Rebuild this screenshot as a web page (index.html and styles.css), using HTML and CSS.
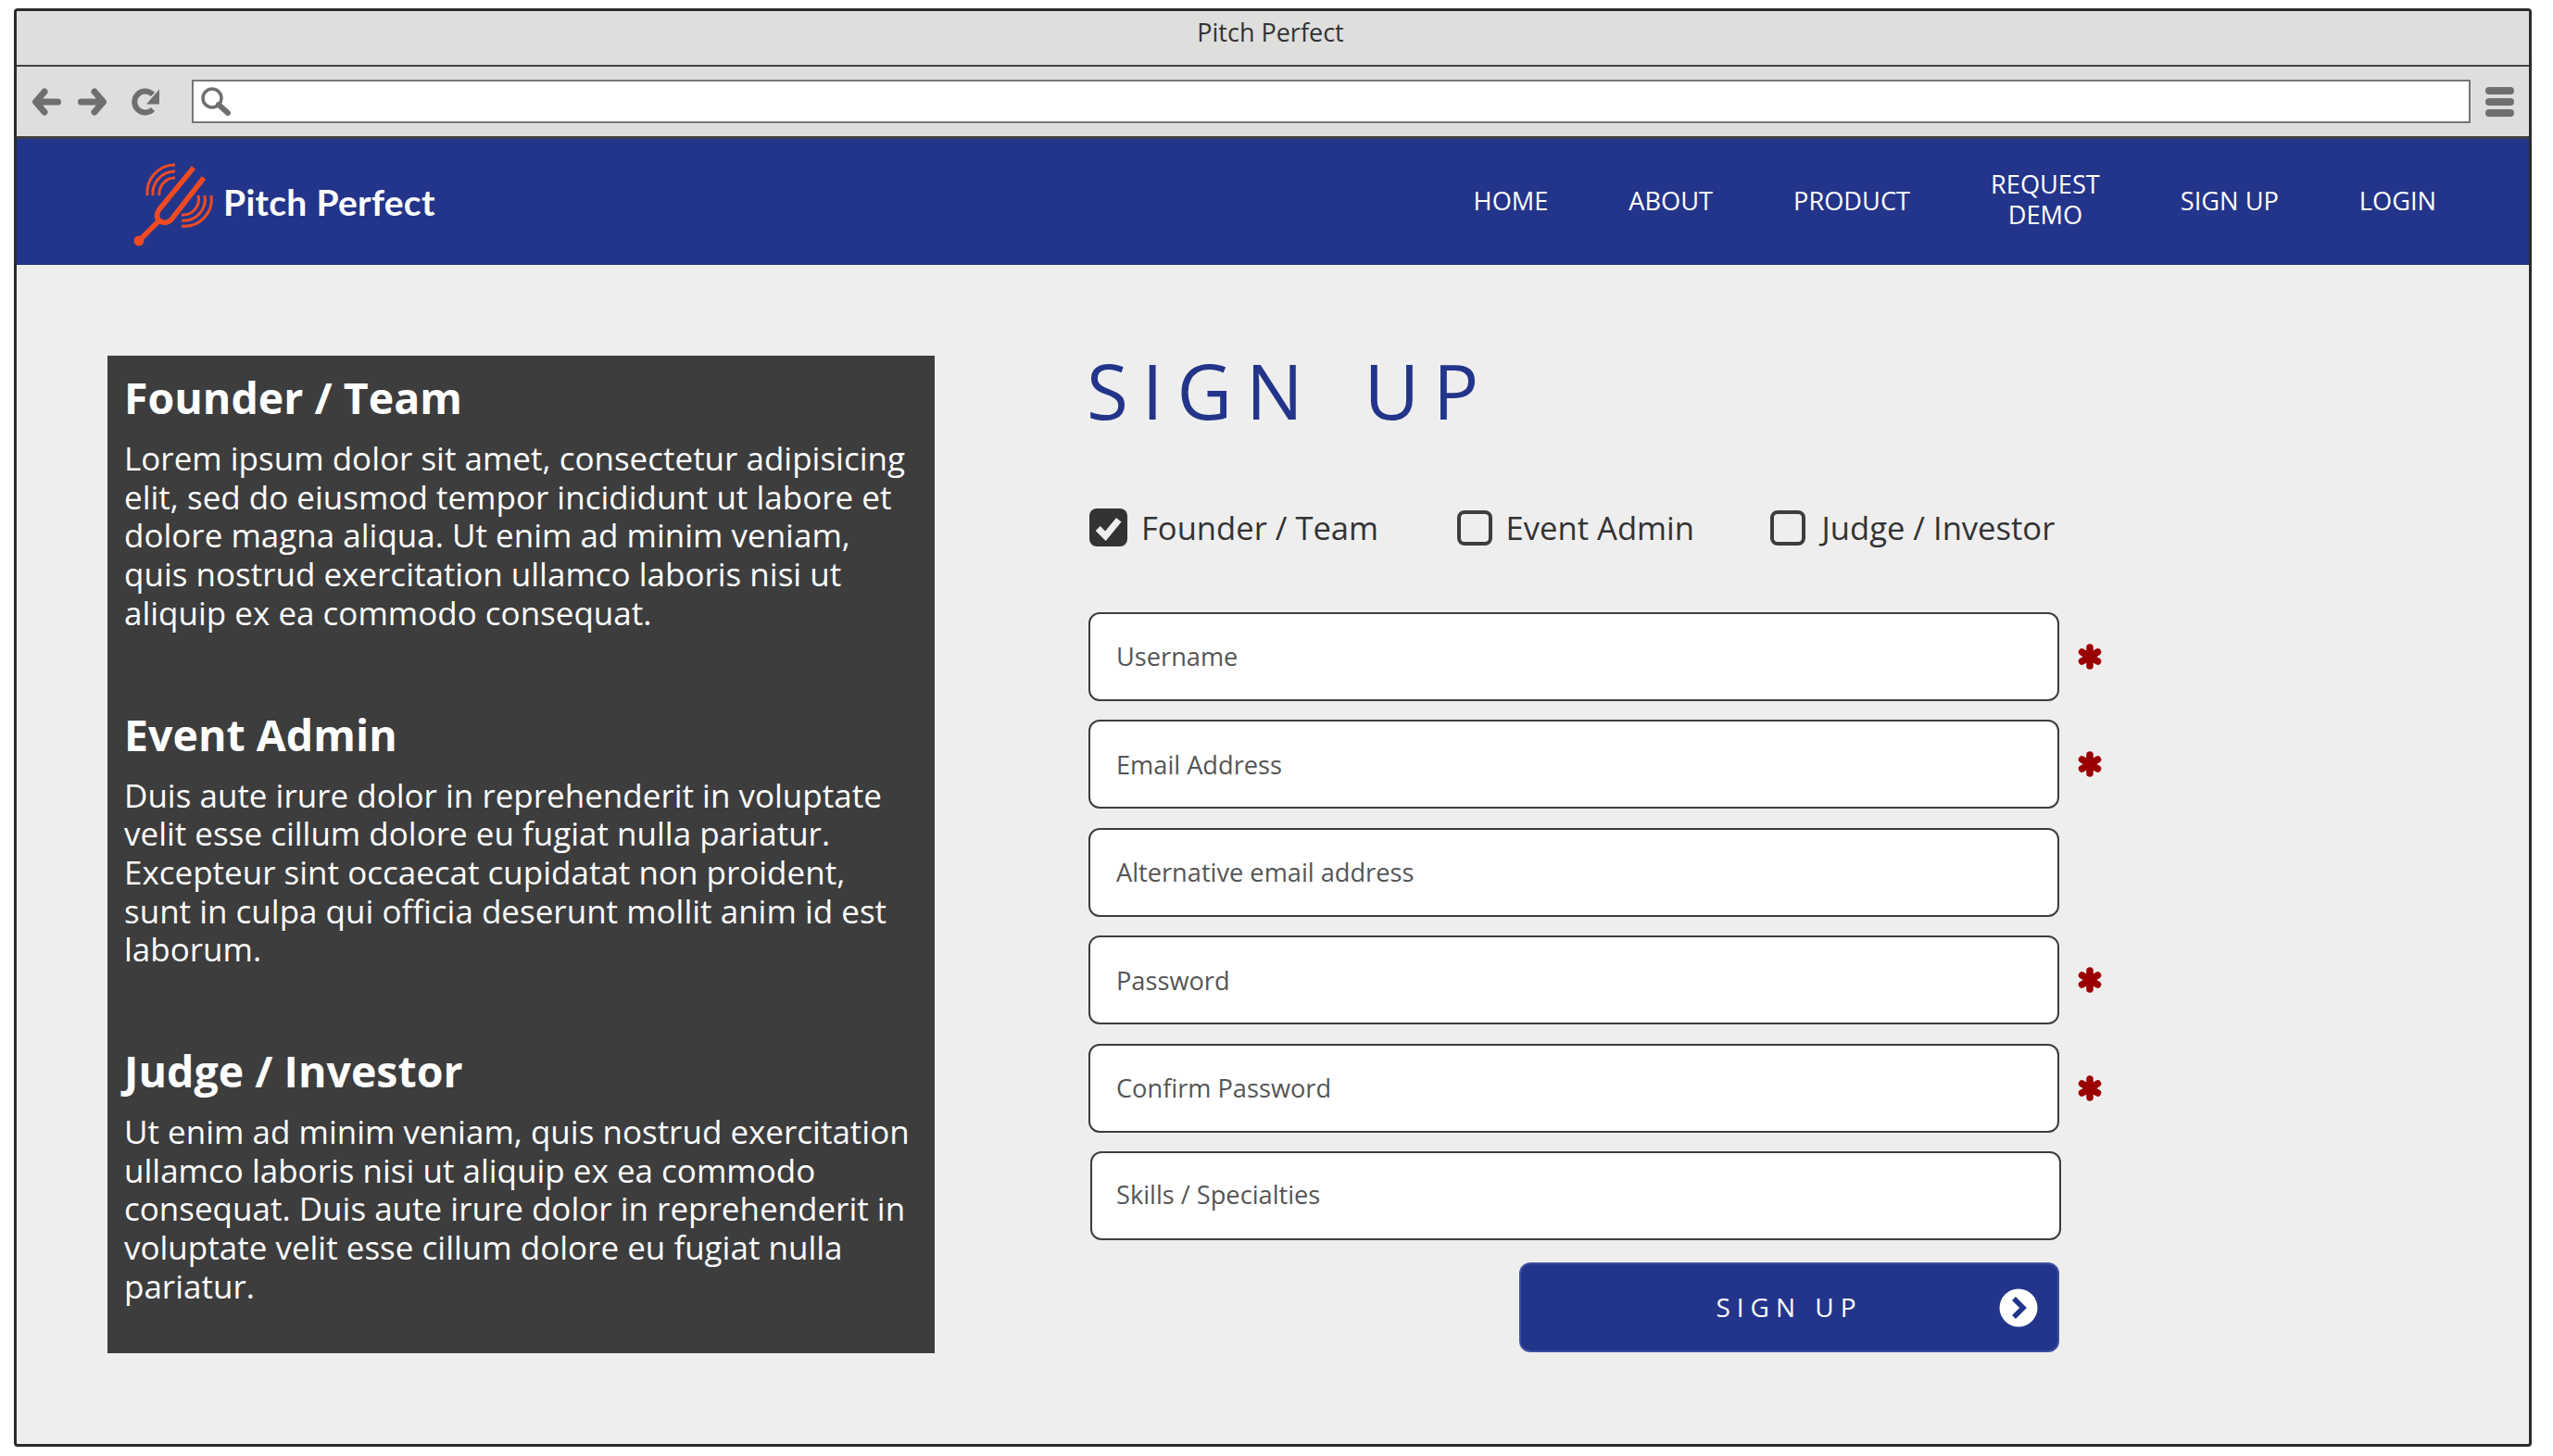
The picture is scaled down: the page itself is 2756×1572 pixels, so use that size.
FILE: index.html
```html
<!DOCTYPE html>
<html lang="en">
<head>
<meta charset="utf-8">
<title>Pitch Perfect</title>
<link rel="stylesheet" href="styles.css">
</head>
<body>
<div class="window">
  <div class="titlebar">Pitch Perfect</div>
  <div class="toolbar">
    <div class="toolbar-icons">
      <svg class="tool-icon" viewBox="0 0 31 30"><path d="M13 4 3.500 15 13 26M6 15h21.500" fill="none" stroke="#6f6f6f" stroke-width="7" stroke-linecap="round" stroke-linejoin="round"/></svg>
      <svg class="tool-icon" viewBox="0 0 31 30"><path d="M18 4l9.500 11L18 26M25 15H3.500" fill="none" stroke="#6f6f6f" stroke-width="7" stroke-linecap="round" stroke-linejoin="round"/></svg>
      <svg class="tool-icon reload" viewBox="0 0 31 30"><path d="M24 23a11.500 11.500 0 1 1 0-16" fill="none" stroke="#6f6f6f" stroke-width="6"/><path d="M31 1.500v16H17z" fill="#6f6f6f"/></svg>
    </div>
    <div class="urlbar">
      <svg class="search" viewBox="0 0 32 31"><circle cx="12" cy="12" r="10" fill="none" stroke="#6f6f6f" stroke-width="3.500"/><path d="M19 19l10 9" stroke="#6f6f6f" stroke-width="6" stroke-linecap="round"/></svg>
    </div>
    <div class="burger"><span></span><span></span><span></span></div>
  </div>
  <header class="nav">
    <div class="brand">
      <svg class="logo" viewBox="0 0 120 110">
        <g fill="none" stroke="#f04a23" stroke-width="3">
          <path d="M28 45a30 30 0 0 1 30-33M34 45a24 24 0 0 1 24-26M41 45a17 17 0 0 1 17-19"/>
          <path d="M65 78a29 29 0 0 0 32-33M65 72a23 23 0 0 0 25-27M65 66a17 17 0 0 0 18-21"/>
        </g>
        <path d="M78 15 41 60c-5 7-2 13 4 14 4 1 7-1 9-3l35-45M43 70 19 94" fill="none" stroke="#f04a23" stroke-width="5.500"/>
        <circle cx="19" cy="94" r="5.500" fill="#f04a23"/>
      </svg>
      <span class="brand-name">Pitch Perfect</span>
    </div>
    <nav class="menu">
      <a>HOME</a><a>ABOUT</a><a>PRODUCT</a><a class="two-line">REQUEST<br>DEMO</a><a>SIGN UP</a><a>LOGIN</a>
    </nav>
  </header>
  <main class="content">
    <aside class="panel">
      <section class="role">
        <h2>Founder / Team</h2>
        <p>Lorem ipsum dolor sit amet, consectetur adipisicing<br>elit, sed do eiusmod tempor incididunt ut labore et<br>dolore magna aliqua. Ut enim ad minim veniam,<br>quis nostrud exercitation ullamco laboris nisi ut<br>aliquip ex ea commodo consequat.</p>
      </section>
      <section class="role">
        <h2>Event Admin</h2>
        <p>Duis aute irure dolor in reprehenderit in voluptate<br>velit esse cillum dolore eu fugiat nulla pariatur.<br>Excepteur sint occaecat cupidatat non proident,<br>sunt in culpa qui officia deserunt mollit anim id est<br>laborum.</p>
      </section>
      <section class="role">
        <h2>Judge / Investor</h2>
        <p>Ut enim ad minim veniam, quis nostrud exercitation<br>ullamco laboris nisi ut aliquip ex ea commodo<br>consequat. Duis aute irure dolor in reprehenderit in<br>voluptate velit esse cillum dolore eu fugiat nulla<br>pariatur.</p>
      </section>
    </aside>
    <section class="signup">
      <h1>SIGN UP</h1>
      <div class="roles">
        <label class="check"><span class="box checked"><svg viewBox="0 0 40 40"><path d="M9 21l8 8 14-17" fill="none" stroke="#eee" stroke-width="7"/></svg></span>Founder / Team</label>
        <label class="check"><span class="box"></span>Event Admin</label>
        <label class="check check-last"><span class="box"></span>Judge / Investor</label>
      </div>
      <div class="fields">
        <div class="field"><div class="input">Username</div><svg class="req" viewBox="0 0 28 28"><path d="M14 4v20M5.500 9l17 10M5.500 19l17-10" stroke="#9b0000" stroke-width="7.500" stroke-linecap="round"/></svg></div>
        <div class="field"><div class="input">Email Address</div><svg class="req" viewBox="0 0 28 28"><path d="M14 4v20M5.500 9l17 10M5.500 19l17-10" stroke="#9b0000" stroke-width="7.500" stroke-linecap="round"/></svg></div>
        <div class="field"><div class="input">Alternative email address</div></div>
        <div class="field"><div class="input">Password</div><svg class="req" viewBox="0 0 28 28"><path d="M14 4v20M5.500 9l17 10M5.500 19l17-10" stroke="#9b0000" stroke-width="7.500" stroke-linecap="round"/></svg></div>
        <div class="field"><div class="input">Confirm Password</div><svg class="req" viewBox="0 0 28 28"><path d="M14 4v20M5.500 9l17 10M5.500 19l17-10" stroke="#9b0000" stroke-width="7.500" stroke-linecap="round"/></svg></div>
        <div class="field skills"><div class="input">Skills / Specialties</div></div>
      </div>
      <button class="submit"><span>SIGN UP</span>
        <svg class="submit-icon" viewBox="0 0 42 42"><circle cx="21" cy="21" r="20.500" fill="#fff"/><path d="M16 11l10 10-10 10" fill="none" stroke="#23358a" stroke-width="5.500"/></svg>
      </button>
    </section>
  </main>
</div>
</body>
</html>
```
FILE: styles.css
```css
* { box-sizing: border-box; }
html, body { margin: 0; padding: 0; background: #fff; }
body { width: 2756px; height: 1572px; padding: 9px 23px 9px 15px; font-family: "Open Sans", "Noto Sans", sans-serif; overflow: hidden; }
.window {
  height: 1553px;
  border: 3px solid #2b2b2b;
  border-radius: 4px;
  background: #eeeeee;
  display: flex;
  flex-direction: column;
  overflow: hidden;
}
.titlebar {
  height: 60px;
  background: #dededd;
  border-bottom: 2px solid #3f3f3f;
  display: flex;
  align-items: center;
  justify-content: center;
  padding: 0 5px 13px 0;
  font-size: 27px;
  color: #333;
  flex: none;
}
.toolbar {
  height: 78px;
  background: #dededd;
  border-bottom: 3px solid #3f3f3f;
  display: flex;
  align-items: center;
  flex: none;
  padding: 0 16px 0 17px;
}
.toolbar-icons { display: flex; gap: 18px; align-items: center; width: 172px; flex: none; }
.tool-icon { width: 31px; height: 30px; }
.reload { margin-left: 8px; }
.urlbar {
  flex: 1;
  height: 47px;
  background: #fff;
  border: 2px solid #777;
  display: flex;
  align-items: center;
  padding-left: 8px;
}
.search { width: 32px; height: 31px; }
.burger { width: 31px; margin-left: 16px; display: flex; flex-direction: column; gap: 4px; }
.burger span { height: 8px; border-radius: 4px; background: #6f6f6f; }
.nav {
  height: 136px;
  background: #23358a;
  display: flex;
  align-items: center;
  justify-content: space-between;
  padding: 0 100px 0 113px;
  flex: none;
}
.brand { display: flex; align-items: center; }
.logo { width: 120px; height: 110px; margin-right: -10px; margin-top: 5px; }
.brand-name { font-family: "Lato", sans-serif; font-weight: 700; font-size: 39px; letter-spacing: 0.3px; color: #fff; }
.menu { display: flex; align-items: center; gap: 87px; margin-top: -3px; }
.menu a { color: #fff; font-size: 27.200px; line-height: 33px; text-align: center; }
.menu a.two-line { margin-top: -3px; }
.content {
  flex: 1;
  display: flex;
  padding: 98px 0 0 98px;
}
.panel {
  width: 893px;
  height: 1077px;
  background: #3d3d3d;
  color: #fff;
  padding: 14px 18px 0;
  flex: none;
}
.role { height: 363.500px; }
.role h2 { margin: 0; font-size: 46.500px; line-height: 62px; font-weight: 700; }
.role p { margin: 0; padding-top: 14px; font-size: 35px; line-height: 41.700px; }
.signup { margin-left: 166px; width: 1050px; }
h1 {
  margin: -16px 0 0 -2px;
  font-weight: 400;
  font-size: 82px;
  line-height: 106px;
  letter-spacing: 14.800px;
  word-spacing: 15px;
  color: #23358a;
}
.roles { display: flex; gap: 84.500px; margin-top: 70.500px; height: 50px; align-items: center; margin-left: 1px; }
.check { display: flex; align-items: center; gap: 15px; font-size: 34.600px; color: #333; white-space: nowrap; }
.check-last { gap: 18px; margin-left: -3px; }
.box { width: 38px; height: 38px; border: 4px solid #3d3d3d; border-radius: 8px; display: block; flex: none; }
.box.checked { width: 41px; height: 41px; background: #333; border: 0; padding: 0; }
.box svg { display: block; width: 100%; height: 100%; }
.fields { margin-top: 66px; display: flex; flex-direction: column; gap: 20.500px; }
.field { display: flex; align-items: center; position: relative; width: 1050px; }
.input {
  width: 1048px;
  height: 96px;
  background: #fff;
  border: 2px solid #3d3d3d;
  border-radius: 12px;
  padding-left: 28px;
  display: flex;
  align-items: center;
  font-size: 27.200px;
  color: #555;
}
.req { position: absolute; left: 1067px; top: 34px; width: 28px; height: 28px; }
.skills { margin-left: 2px; }
.skills .input { padding: 0 0 3px 26px; }
.submit {
  display: flex;
  align-items: center;
  justify-content: center;
  position: relative;
  width: 583px;
  height: 97px;
  margin: 23.500px 0 0 465px;
  background: #23358a;
  border: 2px solid #3d4fa0;
  border-radius: 12px;
  color: #fff;
  font-family: inherit;
  font-size: 28px;
  letter-spacing: 7px;
}
.submit-icon { position: absolute; right: 21px; top: 26px; width: 42px; height: 42px; }
```
